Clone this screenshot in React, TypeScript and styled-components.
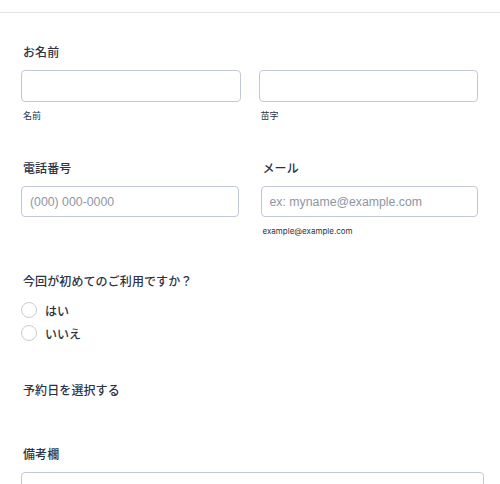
import React from "react";
import styled, { createGlobalStyle } from "styled-components";

const Global = createGlobalStyle`
  html, body { margin: 0; padding: 0; background: #fff; }
  body { font-family: "Inter", "Noto Sans CJK JP", sans-serif; color: #2c3345; }
  * { box-sizing: border-box; }
`;

const Page = styled.div`
  width: 500px;
  height: 484px;
  overflow: hidden;
  padding-top: 12px;
`;

const Divider = styled.div`
  height: 1px;
  background: #e3e5ee;
`;

const Form = styled.div`
  padding: 0 22px 0 21px;
  display: flex;
  flex-direction: column;
`;

const Section = styled.div<{ $top: number }>`
  margin-top: ${(p) => p.$top}px;
  display: flex;
  flex-direction: column;
`;

const Label = styled.div`
  font-family: "Noto Sans CJK JP", sans-serif;
  font-size: 12px;
  font-weight: 500;
  letter-spacing: 0.1px;
  line-height: 16px;
  padding-left: 2px;
  color: #2c3345;
`;

const Row = styled.div<{ $gap: number }>`
  display: grid;
  grid-template-columns: 1fr 1fr;
  column-gap: ${(p) => p.$gap}px;
`;

const Col = styled.div`
  display: flex;
  flex-direction: column;
`;

const Input = styled.div<{ $h: number }>`
  height: ${(p) => p.$h}px;
  border: 1px solid #c3c8d6;
  border-radius: 4px;
  background: #fff;
  display: flex;
  align-items: center;
  padding-left: 8px;
  font-family: "Liberation Sans", Arial, sans-serif;
  font-size: 12.3px;
  color: #8f95a4;
`;

const Sub = styled.div<{ $latin?: boolean }>`
  margin-top: 8px;
  padding-left: 2px;
  font-family: ${(p) => (p.$latin ? '"Inter", sans-serif' : '"Noto Sans CJK JP", sans-serif')};
  font-size: ${(p) => (p.$latin ? 8 : 9)}px;
  line-height: 12px;
  color: #2c3345;
`;

const RadioList = styled.div`
  margin-top: 13px;
  display: flex;
  flex-direction: column;
  gap: 7px;
`;

const RadioRow = styled.div`
  display: flex;
  align-items: center;
  gap: 8px;
  height: 16px;
`;

const Circle = styled.span`
  width: 16px;
  height: 16px;
  border-radius: 50%;
  border: 1px solid #c8ccd8;
  background: #fff;
`;

const RadioText = styled.span`
  font-family: "Noto Sans CJK JP", sans-serif;
  font-size: 12px;
  font-weight: 500;
  color: #2c3345;
`;

const TextArea = styled.div`
  margin-top: 10px;
  margin-right: -6px;
  height: 60px;
  border: 1px solid #c3c8d6;
  border-radius: 4px;
`;

export default function App() {
  return (
    <Page>
      <Global />
      <Divider />
      <Form>
        <Section $top={31}>
          <Label>お名前</Label>
          <Row $gap={18} style={{ marginTop: 10 }}>
            <Col>
              <Input $h={32} />
              <Sub>名前</Sub>
            </Col>
            <Col>
              <Input $h={32} />
              <Sub>苗字</Sub>
            </Col>
          </Row>
        </Section>
        <Row $gap={22}>
          <Section $top={38}>
            <Label>電話番号</Label>
            <Col style={{ marginTop: 10 }}>
              <Input $h={31}>(000) 000-0000</Input>
            </Col>
          </Section>
          <Section $top={38}>
            <Label>メール</Label>
            <Col style={{ marginTop: 10 }}>
              <Input $h={31}>ex: myname@example.com</Input>
              <Sub $latin>example@example.com</Sub>
            </Col>
          </Section>
        </Row>
        <Section $top={36}>
          <Label>今回が初めてのご利用ですか？</Label>
          <RadioList>
            <RadioRow>
              <Circle />
              <RadioText>はい</RadioText>
            </RadioRow>
            <RadioRow>
              <Circle />
              <RadioText>いいえ</RadioText>
            </RadioRow>
          </RadioList>
        </Section>
        <Section $top={41}>
          <Label>予約日を選択する</Label>
        </Section>
        <Section $top={48}>
          <Label>備考欄</Label>
          <TextArea />
        </Section>
      </Form>
    </Page>
  );
}
